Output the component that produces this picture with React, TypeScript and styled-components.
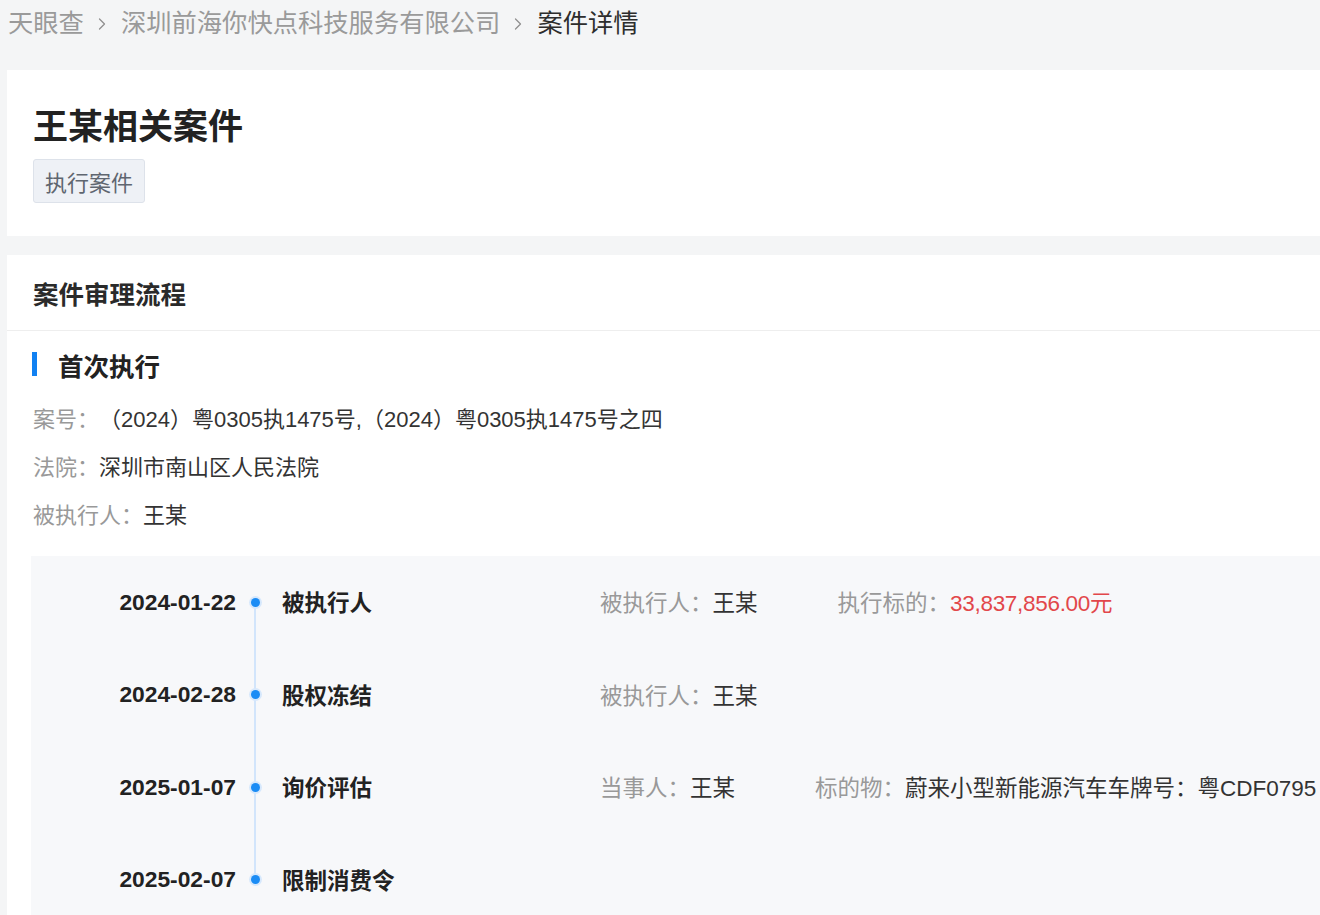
import styled, { createGlobalStyle } from 'styled-components';
import { ChevronRight } from 'lucide-react';

const GlobalStyle = createGlobalStyle`
  html, body {
    margin: 0;
    padding: 0;
    background: #f4f5f6;
    font-family: "Liberation Sans", "Noto Sans CJK SC", sans-serif;
    color: #262626;
    overflow: hidden;
  }
`;

const StyledPage = styled.div`
  width: 1320px;
  height: 915px;
  overflow: hidden;
  padding-left: 7px;
  box-sizing: border-box;
`;

const StyledCrumbs = styled.nav`
  display: flex;
  align-items: center;
  height: 48px;
  margin-left: 1px;
  font-size: 25.3px;
  line-height: 1;
  color: #9a9a9a;
`;

const StyledCrumbSep = styled(ChevronRight)`
  margin: 0 9px 0 8px;
  color: #8f8f8f;
`;

const StyledCrumbCurrent = styled.span`
  color: #2d2d2d;
`;

const StyledCard = styled.section<{ $gap?: number }>`
  background: #fff;
  margin-top: ${(p) => p.$gap ?? 0}px;
  width: 1340px;
`;

const StyledHead = styled.div`
  display: flex;
  flex-direction: column;
  align-items: flex-start;
  padding: 34px 26px 33px;
`;

const StyledTitle = styled.h1`
  margin: 0;
  font-size: 35px;
  line-height: 46px;
  font-weight: 700;
  color: #222;
`;

const StyledTag = styled.span`
  display: inline-flex;
  align-items: center;
  margin-top: 9px;
  height: 44px;
  box-sizing: border-box;
  padding: 0 11px;
  background: #eef1f6;
  border: 1px solid #dde2ea;
  border-radius: 3px;
  font-size: 22px;
  color: #5f6670;
`;

const StyledCardHeader = styled.h2`
  margin: 0;
  height: 75px;
  display: flex;
  align-items: center;
  padding-left: 26px;
  font-size: 25.5px;
  font-weight: 700;
  color: #2a2a2a;
  border-bottom: 1px solid #eeeeee;
`;

const StyledBody = styled.div`
  padding: 16px 0 0 24px;
`;

const StyledSection = styled.h3`
  margin: 0;
  display: flex;
  align-items: center;
  gap: 21px;
  height: 34px;
  padding-left: 1px;
  font-size: 25.5px;
  font-weight: 700;
  color: #222;
  &::before {
    content: '';
    width: 5px;
    height: 24px;
    background: #1181f2;
  }
`;

const StyledInfoList = styled.div`
  margin-top: 12px;
  display: flex;
  flex-direction: column;
`;

const StyledInfoRow = styled.div`
  height: 48px;
  display: flex;
  align-items: center;
  padding-left: 2px;
  font-size: 22px;
  color: #333;
`;

const StyledLabel = styled.span`
  color: #999;
`;

const StyledTimeline = styled.div`
  margin-top: 19px;
  background: #f7f8fa;
  height: 400px;
`;

const StyledStep = styled.div`
  display: grid;
  grid-template-columns: 205px 38px 326px 1fr;
  align-items: center;
  height: 92.5px;
`;

const StyledDate = styled.div`
  text-align: right;
  font-size: 22.8px;
  font-weight: 600;
  color: #222;
`;

const StyledAxis = styled.div<{ $first?: boolean; $last?: boolean }>`
  position: relative;
  height: 100%;
  display: flex;
  align-items: center;
  justify-content: center;
  &::before {
    content: '';
    position: absolute;
    left: 18px;
    width: 2px;
    top: ${(p) => (p.$first ? '50%' : '0')};
    bottom: ${(p) => (p.$last ? '50%' : '0')};
    background: #d2e5fb;
  }
`;

const StyledDot = styled.span`
  position: relative;
  width: 9px;
  height: 9px;
  border-radius: 50%;
  background: #1b8cf5;
  box-shadow: 0 0 0 2px #d6e8fc;
`;

const StyledStepTitle = styled.div`
  padding-left: 8px;
  font-size: 22.5px;
  font-weight: 700;
  color: #222;
  margin-top: -2px;
`;

const StyledFields = styled.div`
  display: flex;
  gap: 80px;
  font-size: 22.5px;
  color: #333;
  margin-top: -2px;
`;

const StyledMoney = styled.span`
  color: #e2474a;
  letter-spacing: -0.3px;
`;

type Field = { label: string; value: string; red?: boolean };
type Step = { date: string; title: string; fields: Field[] };

const steps: Step[] = [
  {
    date: '2024-01-22',
    title: '被执行人',
    fields: [
      { label: '被执行人：', value: '王某' },
      { label: '执行标的：', value: '33,837,856.00元', red: true },
    ],
  },
  {
    date: '2024-02-28',
    title: '股权冻结',
    fields: [{ label: '被执行人：', value: '王某' }],
  },
  {
    date: '2025-01-07',
    title: '询价评估',
    fields: [
      { label: '当事人：', value: '王某' },
      { label: '标的物：', value: '蔚来小型新能源汽车车牌号：粤CDF0795' },
    ],
  },
  { date: '2025-02-07', title: '限制消费令', fields: [] },
];

export default function App() {
  return (
    <>
      <GlobalStyle />
      <StyledPage>
        <StyledCrumbs>
          <span>天眼查</span>
          <StyledCrumbSep size={20} strokeWidth={1.5} />
          <span>深圳前海你快点科技服务有限公司</span>
          <StyledCrumbSep size={20} strokeWidth={1.5} />
          <StyledCrumbCurrent>案件详情</StyledCrumbCurrent>
        </StyledCrumbs>

        <StyledCard $gap={22}>
          <StyledHead>
            <StyledTitle>王某相关案件</StyledTitle>
            <StyledTag>执行案件</StyledTag>
          </StyledHead>
        </StyledCard>

        <StyledCard $gap={19}>
          <StyledCardHeader>案件审理流程</StyledCardHeader>
          <StyledBody>
            <StyledSection>首次执行</StyledSection>
            <StyledInfoList>
              <StyledInfoRow>
                <StyledLabel>案号：</StyledLabel>
                （2024）粤0305执1475号,（2024）粤0305执1475号之四
              </StyledInfoRow>
              <StyledInfoRow>
                <StyledLabel>法院：</StyledLabel>
                深圳市南山区人民法院
              </StyledInfoRow>
              <StyledInfoRow>
                <StyledLabel>被执行人：</StyledLabel>
                王某
              </StyledInfoRow>
            </StyledInfoList>
            <StyledTimeline>
              {steps.map((s, i) => (
                <StyledStep key={s.date}>
                  <StyledDate>{s.date}</StyledDate>
                  <StyledAxis $first={i === 0} $last={i === steps.length - 1}>
                    <StyledDot />
                  </StyledAxis>
                  <StyledStepTitle>{s.title}</StyledStepTitle>
                  <StyledFields>
                    {s.fields.map((f) => (
                      <span key={f.label}>
                        <StyledLabel>{f.label}</StyledLabel>
                        {f.red ? <StyledMoney>{f.value}</StyledMoney> : f.value}
                      </span>
                    ))}
                  </StyledFields>
                </StyledStep>
              ))}
            </StyledTimeline>
          </StyledBody>
        </StyledCard>
      </StyledPage>
    </>
  );
}
